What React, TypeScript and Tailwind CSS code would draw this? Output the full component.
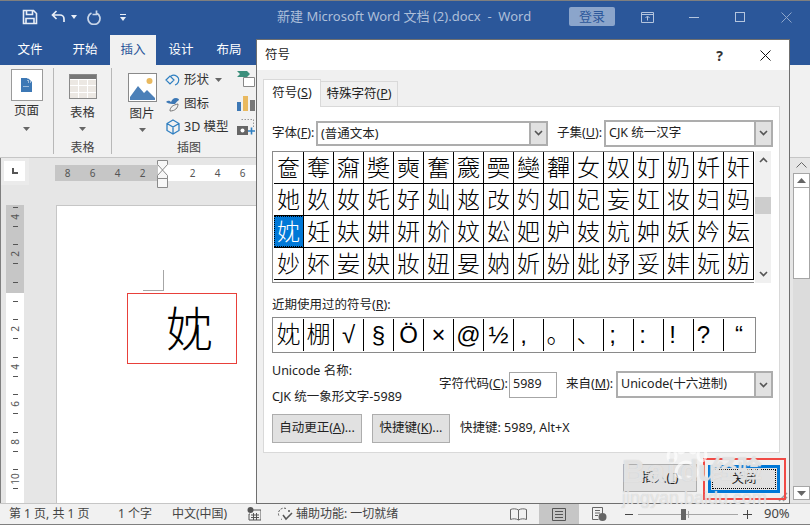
const GRID_ROWS = [
  '奩奪奫奬奭奮奯奰奱奲女奴奵奶奷奸',
  '她奺奻奼好奾奿妀妁如妃妄妅妆妇妈',
  '妉妊妋妌妍妎妏妐妑妒妓妔妕妖妗妘',
  '妙妚妛妜妝妞妟妠妡妢妣妤妥妦妧妨',
];
// punctuation sits left of centre in its cell, so those get right padding
const RECENT = [
  { c: '妉', cls: '' },
  { c: '棚', cls: '' },
  { c: '√', cls: '' },
  { c: '§', cls: '' },
  { c: 'Ö', cls: '' },
  { c: '×', cls: '' },
  { c: '@', cls: '' },
  { c: '½', cls: '' },
  { c: ',', cls: 'pr-[10px]' },
  { c: '。', cls: '' },
  { c: '、', cls: '' },
  { c: ';', cls: 'pr-[12px]' },
  { c: ':', cls: 'pr-[12px]' },
  { c: '!', cls: 'pr-[12px]' },
  { c: '?', cls: 'pr-[10px]' },
  { c: '“', cls: '' },
];
const TABS = [
  { label: '文件', w: 'w-[60px]' },
  { label: '开始', w: 'w-[50px]' },
  { label: '插入', w: 'w-[46px]', active: true },
  { label: '设计', w: 'w-[50px]' },
  { label: '布局', w: 'w-[46px]' },
];

const Caret = ({ className = '' }: { className?: string }) => (
  <svg width="7" height="4" viewBox="0 0 7 4" className={className}>
    <path d="M0 0h7L3.5 4z" fill="#666" />
  </svg>
);

const Chevron = ({ up = false }: { up?: boolean }) => (
  <svg width="9" height="6" viewBox="0 0 9 6">
    <path d={up ? 'M1 5l3.5-3.5L8 5' : 'M1 1l3.5 3.5L8 1'} fill="none" stroke="#555" strokeWidth="1.6" />
  </svg>
);

const TitleBar = () => (
  <div className="h-[33px] flex items-center bg-[#2b579a] border-t border-[#7f7f7f] shrink-0 relative">
    <svg width="16" height="16" viewBox="0 0 16 16" className="ml-[22px]">
      <path d="M1.5 1.5h10l3 3v10h-13z M4.5 1.5v4h6v-4 M4 14.5v-5h8v5" fill="none" stroke="#e8eef7" strokeWidth="1.6" />
    </svg>
    <svg width="16" height="14" viewBox="0 0 16 14" className="ml-[13px]">
      <path d="M5.5 1L1.5 5l4 4 M2 5h7a4 4 0 0 1 4 4v3" fill="none" stroke="#e8eef7" strokeWidth="1.7" />
    </svg>
    <svg width="6" height="4" viewBox="0 0 6 4" className="ml-[4px]">
      <path d="M0 0h6L3 4z" fill="#e8eef7" />
    </svg>
    <svg width="15" height="15" viewBox="0 0 15 15" className="ml-[10px]">
      <path d="M4.5 3a6 6 0 1 0 5 0 M9.5 0.5v4h-4" fill="none" stroke="#c9d6e9" strokeWidth="1.7" />
    </svg>
    <svg width="6" height="7" viewBox="0 0 6 7" className="ml-[18px]">
      <path d="M0 0h6v1H0zM0 3h6L3 7z" fill="#e8eef7" />
    </svg>
    <div className="w-[256px] ml-[151px] text-[13px] text-[#aebfd9] whitespace-pre">
      新建 Microsoft Word 文档 (2).docx  -  Word
    </div>
    <div className="w-[46px] h-[19px] ml-[36px] mb-[1px] rounded-[2px] bg-[#8ba5cb] text-[#2b579a] text-[13px] leading-[19px] text-center">登录</div>
    <svg width="13" height="11" viewBox="0 0 13 11" className="ml-[26px]">
      <path d="M.5.5h12v10H.5zM.5 2.5h12M6.5 8.5V4.5M4.5 6l2-2 2 2" fill="none" stroke="#b4c5de" />
    </svg>
    <div className="w-[10px] h-px bg-[#b4c5de] ml-[35px]" />
    <div className="w-[10px] h-[10px] border border-[#b4c5de] ml-[36px]" />
    <svg width="11" height="11" viewBox="0 0 11 11" className="ml-[36px]">
      <path d="M.5.5l10 10M10.5.5l-10 10" stroke="#8ea6cb" />
    </svg>
  </div>
);

const TabRow = () => (
  <div className="h-[32px] flex items-end bg-[#2b579a] shrink-0 text-[12.5px] text-white">
    {TABS.map(t => (
      <div
        key={t.label}
        className={`${t.w} h-[30px] leading-[29px] text-center ${t.active ? 'bg-[#f1f1f1] text-[#2b579a]' : ''}`}
      >
        {t.label}
      </div>
    ))}
  </div>
);

const RibbonLabel = ({ text }: { text: string }) => <div className="text-[12px] text-[#444] leading-[16px] text-center">{text}</div>;

const Ribbon = () => (
  <div className="h-[93px] flex bg-[#f1f1f1] border-b border-[#c6c6c6] shrink-0 text-[12px] text-[#333]">
    <div className="w-[54px] my-[3px] border-r border-[#b8b8b8] flex flex-col items-center shrink-0">
      <div className="w-[32px] h-[32px] mt-px bg-white border border-[#9a9a9a] flex items-center justify-center">
        <svg width="11" height="14" viewBox="0 0 11 14">
          <path d="M0 0h7l4 4v10H0z" fill="#3d78b5" />
          <path d="M7 0v4h4M2.500 8.500h6" stroke="#fff" strokeDasharray="1 1" fill="none" />
        </svg>
      </div>
      <div className="mt-[1px] leading-[18px] text-[12.5px]">页面</div>
      <Caret className="mt-[7px]" />
    </div>
    <div className="w-[58px] my-[3px] border-r border-[#b8b8b8] flex flex-col items-center shrink-0">
      <div className="w-[28px] h-[25px] mt-[6px] border border-[#8a8a8a] bg-white grid grid-cols-3 grid-rows-[4px_1fr_1fr_1fr] gap-px bg-clip-padding">
        <div className="col-span-3 bg-[#777]" />
        {Array.from({ length: 9 }).map((_, i) => (
          <div key={i} className="bg-[#ece8e3]" />
        ))}
      </div>
      <div className="mt-[5px] leading-[18px] text-[12.5px]">表格</div>
      <Caret className="mt-[5px]" />
      <div className="mt-auto mb-[-2px]">
        <RibbonLabel text="表格" />
      </div>
    </div>
    <div className="grow pt-[3px] pb-[3px] flex flex-col">
      <div className="flex grow">
        <div className="w-[59px] mr-[-6px] flex flex-col items-center shrink-0 pl-[1px]">
          <div className="w-[29px] h-[29px] mt-[5px] border border-[#8a8a8a] bg-white p-[1px]">
            <svg width="25" height="25" viewBox="0 0 25 25">
              <circle cx="19.500" cy="6" r="3" fill="#e9b95f" />
              <path d="M0 22l8-11 6 7 3-3 8 8v2H0z" fill="#4c80b8" />
            </svg>
          </div>
          <div className="mt-[3px] leading-[18px] text-[12.500px]">图片</div>
          <Caret className="mt-[5px]" />
        </div>
        <div className="flex flex-col w-[70px] text-[12.5px] leading-[18px] shrink-0 pt-[3px] gap-[5.5px]">
          <div className="flex items-center gap-[3px] whitespace-nowrap">
            <svg width="16" height="16" viewBox="0 0 16 16">
              <path d="M1 8l4-4 4 4-4 4zM6 4a5 5 0 1 1 4 9" fill="none" stroke="#2f7fc1" strokeWidth="1.2" />
            </svg>
            形状
            <Caret className="ml-[3px]" />
          </div>
          <div className="flex items-center gap-[3px]">
            <svg width="16" height="16" viewBox="0 0 16 16">
              <path d="M1 6c2-2 4-1 5 0 1-2 2-4 5-4 2 0 3 1 3 2-2 1-3 3-4 4-3 0-6 0-9-2z" fill="#3d78b5" />
              <path d="M5 15c0-4 3-6 8-7 0 4-3 7-8 7z" fill="none" stroke="#777" />
            </svg>
            图标
          </div>
          <div className="flex items-center gap-[3px] whitespace-nowrap">
            <svg width="16" height="16" viewBox="0 0 16 16">
              <path d="M8 1l6 3.500v7L8 15l-6-3.500v-7zM2 4.500L8 8l6-3.500M8 8v7" fill="none" stroke="#2f7fc1" strokeWidth="1.3" />
            </svg>
            3D 模型
          </div>
        </div>
        <div className="flex flex-col pl-[2px] pt-[2px] gap-[8px]">
          <svg width="18" height="18" viewBox="0 0 18 18">
            <path d="M0 1h10l3 3-3 3H0l3-3z" fill="#3c8f7c" />
            <path d="M6.500 7.500h11v9h-11z" fill="#fff" stroke="#888" />
          </svg>
          <svg width="18" height="15" viewBox="0 0 18 15">
            <path d="M0 6h4v9H0z" fill="#3d78b5" />
            <path d="M6 0h5v15H6z" fill="#e9b95f" />
            <path d="M13 4h5v11h-5z" fill="#777" />
          </svg>
          <svg width="18" height="16" viewBox="0 0 18 16">
            <path d="M4.500.5h12v9" fill="none" stroke="#999" strokeDasharray="1.500 1.500" />
            <path d="M0 7h11v9H0z" fill="#666" />
            <circle cx="5.500" cy="11.500" r="2" fill="#fff" />
            <path d="M11 12h7M14.500 8.500v7" stroke="#2f7fc1" strokeWidth="1.600" />
          </svg>
        </div>
      </div>
      <div className="w-[136px] pl-[18px] mb-[-2px]">
        <RibbonLabel text="插图" />
      </div>
    </div>
  </div>
);

const HRuler = () => (
  <div className="h-[47px] flex shrink-0">
    <div className="w-[28px] h-[27px] bg-[#ebebeb] flex items-start pl-[3px] pt-[3px]">
      <div className="w-[21px] h-[20px] bg-white flex items-center justify-center">
        <div className="w-[6px] h-[6px] border-l-2 border-b-2 border-[#555]" />
      </div>
    </div>
    <div className="ml-[26px] mt-[7px] h-[16px] w-[201px] bg-[linear-gradient(90deg,#c6c6c6_103px,#fff_103px)] flex text-[10px] leading-[16px] text-[#555] relative">
      {['8', '6', '4', '2', '', '2', '4', '6'].map((n, i) => (
        <div key={i} className="w-[25px] text-center">{n}</div>
      ))}
      <svg width="11" height="28" viewBox="0 0 11 28" className="absolute left-[102px] top-[-5px]">
        <path d="M.5.5h10v4L5.500 10 .5 4.500zM5.500 10l5 5.500v3H.5v-3zM.5 18.500h10v9H.5z" fill="#f7f7f7" stroke="#8a8a8a" />
      </svg>
    </div>
  </div>
);

const VRuler = () => (
  <div className="w-[18px] ml-[5px] h-full bg-[linear-gradient(#c6c6c6_88px,#fff_88px)] overflow-hidden shrink-0">
    <div className="mt-[-7px]">
      {['4', '2', '', '2', '4', '6', '8', '10'].map((n, i) => (
        <div key={i} className="h-[37.5px] flex flex-col items-center justify-center">
          <div className="w-[5px] h-px bg-[#555]" />
          <div className="h-[17.8px] flex items-center justify-center text-[10px] text-[#555] rotate-[-90deg] leading-none">{n}</div>
          <div className="w-[5px] h-px bg-[#555]" />
        </div>
      ))}
    </div>
  </div>
);

const WordScrollbar = () => (
  <div className="w-[21px] flex flex-col items-center shrink-0 pl-[3px]">
    <div className="h-[4px]" />
    <svg width="11" height="6" viewBox="0 0 11 6">
      <path d="M.5 5.500l5-5 5 5" fill="none" stroke="#666" />
    </svg>
    <div className="grow w-[17px] mt-[5px] mb-[3px] bg-[#dcdcdc] flex flex-col">
      <div className="h-[15px] bg-white border border-[#a6a6a6] flex items-center justify-center">
        <svg width="9" height="5" viewBox="0 0 9 5"><path d="M0 5l4.500-5L9 5z" fill="#666" /></svg>
      </div>
      <div className="h-[91px] bg-white border border-t-0 border-[#a6a6a6]" />
      <div className="grow" />
      <div className="h-[14px] bg-white border border-[#a6a6a6] flex items-center justify-center">
        <svg width="9" height="5" viewBox="0 0 9 5"><path d="M0 0h9L4.500 5z" fill="#666" /></svg>
      </div>
    </div>
  </div>
);

const DocArea = () => (
  <div className="grow flex flex-col min-w-0">
    <HRuler />
    <div className="grow flex min-h-0">
      <VRuler />
      <div className="ml-[32px] grow bg-white border-l border-t border-[#c6c6c6] pt-[64px] pl-[70px]">
        <div className="ml-[16px] w-[21px] h-[21px] border-r border-b border-[#a6a6a6]" />
        <div className="mt-[2px] w-[110px] h-[71px] border border-[#e8403a] flex items-center justify-end pr-[23px]">
          <span className="text-[47px] leading-none text-black font-light">妉</span>
        </div>
      </div>
    </div>
  </div>
);

const Combo = ({ text, className }: { text: string; className: string }) => (
  <div className={`${className} flex bg-white border-2 border-[#adadad] text-[12.500px] text-[#222]`}>
    <div className="grow pl-[3px] leading-[22px] whitespace-nowrap">{text}</div>
    <div className="w-[17px] bg-[#e1e1e1] border-l-2 border-[#adadad] flex items-center justify-center">
      <Chevron />
    </div>
  </div>
);

const DialogButton = ({ className, children }: { className: string; children: React.ReactNode }) => (
  <div className={`${className} bg-[#e1e1e1] border border-[#adadad] flex items-center justify-center text-[12.500px] text-[#222] whitespace-nowrap`}>
    {children}
  </div>
);

const SymbolGrid = () => (
  <div className="flex mt-[4px]">
    <div className="w-[482px] h-[132px] border border-[#8a8a8a] border-r-0 bg-white pl-px overflow-hidden">
      {GRID_ROWS.map(row => (
        <div key={row} className="flex h-[32px] border-b border-black">
          {Array.from(row).map(c => (
            <div
              key={c}
              className={`w-[30px] h-full border-r border-black flex items-center justify-center text-[23px] leading-none font-light ${c === '妉' ? 'bg-[#0078d7] text-white outline-1 -outline-offset-1 outline-dotted outline-black' : 'text-black'}`}
            >
              {c}
            </div>
          ))}
        </div>
      ))}
    </div>
    <div className="w-[16px] h-[132px] ml-px bg-[#f0f0f0] flex flex-col items-center pt-[6px]">
      <Chevron up />
      <div className="h-[17px] w-full bg-[#cdcdcd] mt-[34px]" />
      <div className="mt-auto mb-[6px]">
        <Chevron />
      </div>
    </div>
  </div>
);

const SymbolDialog = () => (
  <div className="absolute left-[256px] top-[39px] w-[534px] h-[465px] bg-[#f0f0f0] border border-[#6f6f6f] flex flex-col">
    <div className="h-[30px] shrink-0 bg-white flex items-center pl-[8px] text-[12.500px] text-[#222]">
      <span className="grow">符号</span>
      <span className="text-[14px] font-bold text-[#333] mr-[37px]">?</span>
      <svg width="11" height="11" viewBox="0 0 11 11" className="mr-[18px]">
        <path d="M.5.5l10 10M10.500.5l-10 10" stroke="#111" />
      </svg>
    </div>
    <div className="flex pl-[6px] h-[27px] mt-[9px] shrink-0 text-[12.500px] text-[#222] relative z-10">
      <div className="w-[58px] h-[28px] bg-white border border-b-0 border-[#d9d9d9] text-center leading-[26px]">
        符号(<u>S</u>)
      </div>
      <div className="w-[77px] h-[26px] mt-[2px] bg-[#f0f0f0] border border-l-0 border-[#d9d9d9] text-center leading-[24px]">
        特殊字符(<u>P</u>)
      </div>
    </div>
    <div className="mx-[6px] w-[517px] h-[347px] shrink-0 bg-white border border-[#d9d9d9] pl-[8px] pt-[12px] text-[12.500px] text-[#222]">
      <div className="flex items-center h-[28px]">
        <span className="w-[44px] whitespace-nowrap">字体(<u>F</u>):</span>
        <Combo text="(普通文本)" className="w-[232px] h-[25px]" />
        <span className="ml-[9px] w-[47px] whitespace-nowrap">子集(<u>U</u>):</span>
        <Combo text="CJK 统一汉字" className="w-[169px] h-[27px]" />
      </div>
      <SymbolGrid />
      <div className="mt-[13px] h-[18px] leading-[18px]">近期使用过的符号(<u>R</u>):</div>
      <div className="mt-[3px] w-[484px] h-[36px] border border-[#8a8a8a] flex py-[1px] pl-[1px]">
        {RECENT.map(({ c, cls }, i) => (
          <div
            key={c}
            className={`w-[30px] flex items-center justify-center text-[24px] leading-none text-black font-light font-['Liberation_Sans','Noto_Sans_CJK_SC',sans-serif] ${cls} ${i < 15 ? 'border-r border-black' : ''}`}
          >
            {c}
          </div>
        ))}
      </div>
      <div className="flex h-[51px] mt-[5px]">
        <div className="w-[167px] shrink-0 leading-[26px]">
          <div>Unicode 名称:</div>
          <div className="whitespace-nowrap">CJK 统一象形文字-5989</div>
        </div>
        <div className="flex items-center h-[27px] mt-[13px]">
          <span className="whitespace-nowrap w-[70px]">字符代码(<u>C</u>):</span>
          <div className="w-[48px] h-[26px] border border-[#a6a6a6] pl-[3px] leading-[22px]">5989</div>
          <span className="ml-[9px] w-[50px] whitespace-nowrap">来自(<u>M</u>):</span>
          <Combo text="Unicode(十六进制)" className="w-[157px] h-[27px]" />
        </div>
      </div>
      <div className="flex items-center mt-[5px]">
        <DialogButton className="w-[90px] h-[29px]">
          <span>自动更正(<u>A</u>)...</span>
        </DialogButton>
        <DialogButton className="w-[78px] h-[29px] ml-[10px]">
          <span>快捷键(<u>K</u>)...</span>
        </DialogButton>
        <span className="ml-[10px] whitespace-nowrap">快捷键: 5989, Alt+X</span>
      </div>
    </div>
    <div className="flex pt-[11px] pl-[366px]">
      <DialogButton className="w-[74px] h-[28px]">
        <span>插入(<u>I</u>)</span>
      </DialogButton>
      <div className="ml-[11px] w-[72px] h-[28px] mt-[1px] bg-[#e1e1e1] border-[3px] border-[#0078d7] p-[1px]">
        <div className="w-full h-full border border-dotted border-black flex items-center justify-center text-[12.500px] text-[#222]">关闭</div>
      </div>
    </div>
    <svg width="10" height="10" viewBox="0 0 10 10" className="absolute right-[1px] bottom-[1px]">
      <path d="M9 1L1 9M9 5L5 9" stroke="#9a9a9a" strokeWidth="1.500" />
    </svg>
    <div className="absolute left-[446px] top-[418px] w-[83px] h-[42px] border-2 border-[#f04a45] " />
  </div>
);

const Watermark = () => (
  <div className="absolute left-[620px] top-[440px] w-[145px] h-[66px] pointer-events-none text-white/50 [text-shadow:0_0_1px_#c4c4c4] font-bold font-['Liberation_Sans','Noto_Sans_CJK_SC',sans-serif]">
    <svg width="42" height="40" viewBox="0 0 42 40" className="absolute left-[46px] top-0">
      <g fill="none" stroke="#fff" strokeOpacity="0.65" strokeWidth="3">
        <ellipse cx="6" cy="16" rx="4" ry="6" />
        <ellipse cx="15" cy="7" rx="4" ry="6" />
        <ellipse cx="27" cy="7" rx="4" ry="6" />
        <ellipse cx="36" cy="15" rx="4" ry="6" />
        <path d="M10 33c0-6 5-11 10-11s11 5 11 11c0 5-6 5-10 4-4 1-11 1-11-4z" />
      </g>
    </svg>
    <div className="absolute left-[2px] top-[15px] text-[32px] leading-none tracking-[2px]">Bai</div>
    <div className="absolute left-[60px] top-[16px] text-[30px] leading-none">du</div>
    <div className="absolute left-[92px] top-[17px] text-[25px] leading-none">经验</div>
    <div className="absolute left-[2px] top-[49px] text-[18px] leading-none font-normal whitespace-nowrap">jingyan.baidu.com</div>
  </div>
);

const StatusBar = () => (
  <div className="h-[22px] shrink-0 flex items-center bg-[#f1f1f1] border-t border-[#c6c6c6] border-b border-b-[#7f7f7f] text-[12px] text-[#444] whitespace-nowrap">
    <span className="ml-[9px] w-[109px]">第 1 页, 共 1 页</span>
    <span className="w-[54px]">1 个字</span>
    <span className="w-[75px]">中文(中国)</span>
    <svg width="14" height="14" viewBox="0 0 14 14">
      <circle cx="3.500" cy="3" r="3" fill="#555" />
      <path d="M6 3h8v10H2V7h1M4 8h8M4 10.500h8M6.500 6v7M9.500 6v7" fill="none" stroke="#555" />
    </svg>
    <svg width="16" height="14" viewBox="0 0 16 14" className="ml-[16px]">
      <path d="M9 1.500A5.500 5.500 0 0 0 2 9M4 12a5.500 5.500 0 0 0 1 .5" fill="none" stroke="#555" strokeDasharray="2 1.500" />
      <path d="M6 8l3 4 6-6M12 3v2" fill="none" stroke="#555" strokeWidth="1.500" />
    </svg>
    <span className="ml-[3px] w-[214px]">辅助功能: 一切就绪</span>
    <svg width="17" height="13" viewBox="0 0 17 13">
      <path d="M8.500 2C6 .5 3 .5.500 1.500v10c2.500-1 5.500-1 8 .5 2.500-1.500 5.500-1.500 8-.5v-10C14 .5 11 .5 8.500 2zM8.500 2v10" fill="none" stroke="#666" />
    </svg>
    <div className="ml-[12px] w-[40px] h-full bg-[#c6c6c6] flex items-center justify-center">
      <svg width="14" height="13" viewBox="0 0 14 13">
        <path d="M.5.5h13v12H.5zM3 3.500h8M3 6.500h8M3 9.500h8" fill="none" stroke="#555" />
      </svg>
    </div>
    <svg width="15" height="14" viewBox="0 0 15 14" className="ml-[13px]">
      <path d="M.5.500h10v9M.5.500v12h6M3 3.500h5M3 6h5M3 8.500h3" fill="none" stroke="#666" />
      <circle cx="10.500" cy="10" r="4" fill="#666" />
    </svg>
    <div className="ml-[18px] w-[8px] h-px bg-[#444]" />
    <div className="ml-[5px] w-[100px] h-px bg-[#a6a6a6] relative">
      <div className="absolute left-[43px] top-[-5px] w-[5px] h-[11px] bg-[#666]" />
      <div className="absolute left-[50px] top-[-3px] w-px h-[7px] bg-[#a6a6a6]" />
    </div>
    <svg width="9" height="9" viewBox="0 0 9 9" className="ml-[5px]">
      <path d="M0 4.500h9M4.500 0v9" stroke="#444" />
    </svg>
    <span className="ml-[12px] text-[13px]">90%</span>
  </div>
);

const App = () => {
  return (
    <div className="w-[810px] h-[525px] relative overflow-hidden flex flex-col bg-[#e6e6e6] font-['Noto_Sans','Noto_Sans_CJK_SC',sans-serif]">
      <TitleBar />
      <TabRow />
      <Ribbon />
      <div className="grow flex min-h-0 border-l border-[#7f7f7f]">
        <DocArea />
        <WordScrollbar />
      </div>
      <StatusBar />
      <SymbolDialog />
      <Watermark />
    </div>
  );
};

export default App;
